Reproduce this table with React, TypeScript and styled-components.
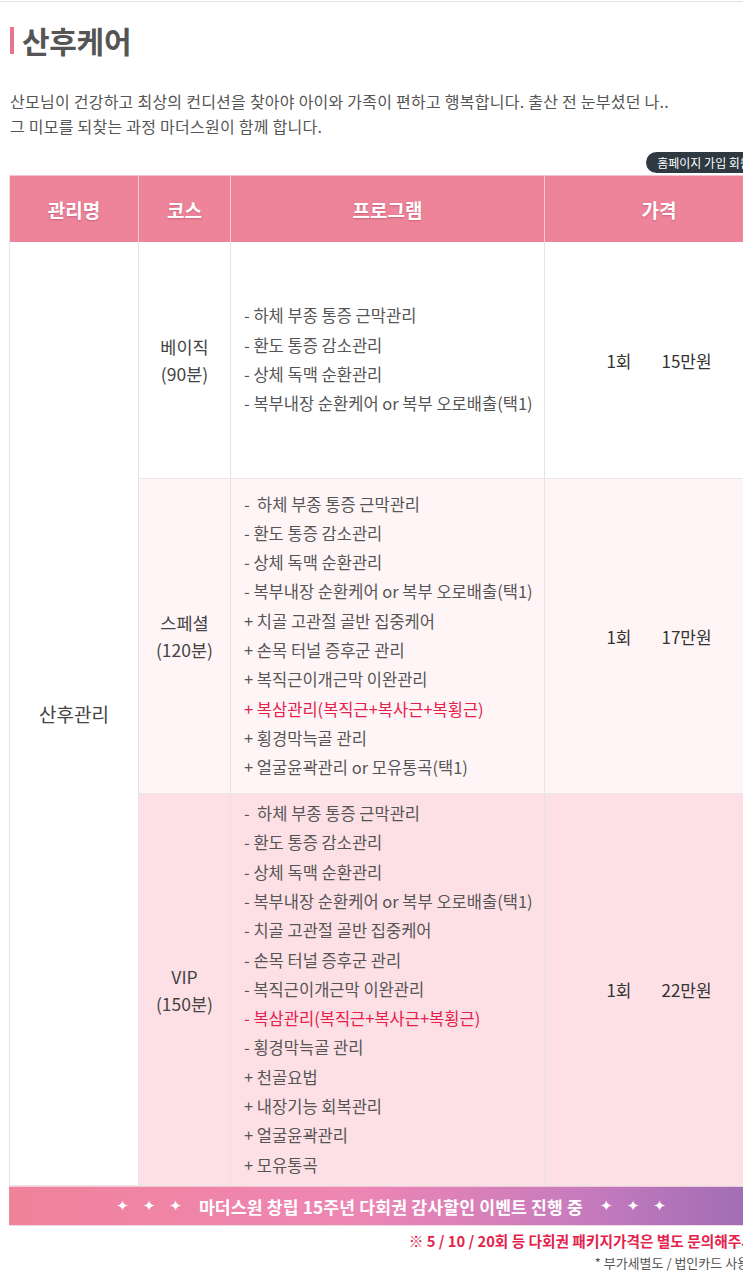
import React from "react";
import styled, { createGlobalStyle } from "styled-components";

const Global = createGlobalStyle`
  html, body { margin: 0; padding: 0; background: #fff; overflow-x: hidden; }
  body { font-family: "Noto Sans CJK KR", "Noto Sans", "DejaVu Sans", sans-serif; color: #555; }
  * { box-sizing: border-box; }
`;

const TopRule = styled.div`
  height: 1px;
  margin-top: 1px;
  background: #e2e2e2;
  width: 100%;
`;

const Wrap = styled.div`
  width: 764px;
  margin-left: 9px;
`;

const Title = styled.h2`
  margin: 20px 0 0 1px;
  display: flex;
  align-items: center;
  gap: 8px;
  font-size: 30px;
  line-height: 36px;
  font-weight: 700;
  color: #555;
  letter-spacing: -0.3px;
`;

const TitleBar = styled.span`
  display: block;
  width: 4px;
  height: 27px;
  background: #e9748c;
`;

const Intro = styled.p`
  margin: 31px 0 0 1px;
  font-size: 16px;
  line-height: 25px;
  color: #555;
  letter-spacing: 0.25px;
`;

const BadgeRow = styled.div`
  display: flex;
  justify-content: flex-end;
  margin-top: 13px;
  margin-bottom: 2px;
`;

const Badge = styled.span`
  display: inline-flex;
  align-items: center;
  height: 21px;
  padding: 0 11px;
  border-radius: 11px;
  background: #2e3942;
  color: #fff;
  font-size: 12px;
  white-space: nowrap;
`;

const Table = styled.div`
  display: grid;
  grid-template-columns: 129px 92px 314px 229px;
  grid-template-rows: 67px 237px 315px 392px;
  border-left: 1px solid #e4e4e4;
`;

const HeadCell = styled.div`
  background: #ed8499;
  color: #fff;
  font-size: 19px;
  font-weight: 700;
  display: flex;
  align-items: center;
  justify-content: center;
  border-right: 1px solid #f7c9d3;
  border-top: 1px solid #f3c4ce;
  text-shadow: 0 1px 2px rgba(150, 40, 70, 0.35);
`;

const Cell = styled.div<{ $bg?: string; $span?: string; $size?: number }>`
  background: ${(p) => p.$bg || "#fff"};
  grid-row: ${(p) => p.$span || "auto"};
  border-right: 1px solid #e6e3e4;
  border-bottom: 1px solid #ebe6e7;
  display: flex;
  align-items: center;
  justify-content: center;
  text-align: center;
  font-size: ${(p) => p.$size || 17.5}px;
  line-height: 27px;
  color: #444;
`;

const ProgramCell = styled.div<{ $bg?: string }>`
  background: ${(p) => p.$bg || "#fff"};
  border-right: 1px solid #e6e3e4;
  border-bottom: 1px solid #ebe6e7;
  display: flex;
  flex-direction: column;
  justify-content: center;
  padding: 0 13px;
`;

const Line = styled.div<{ $red?: boolean }>`
  font-size: 16.5px;
  letter-spacing: 0;
  line-height: 29.3px;
  white-space: pre;
  color: ${(p) => (p.$red ? "#e5214b" : "#555")};
`;

const Price = styled.div`
  display: flex;
  gap: 30px;
  font-size: 17px;
  color: #333;
`;

const Banner = styled.div`
  height: 40px;
  display: flex;
  align-items: center;
  justify-content: center;
  gap: 17px;
  background: linear-gradient(90deg, #f0839a 0%, #ee86b4 45%, #c77bbd 75%, #9a6bb4 100%);
  color: #fff;
  font-size: 17.2px;
  letter-spacing: 0.15px;
  font-weight: 700;
  border-top: 1px solid #f6c7d2;
  border-bottom: 1px solid #f1dbe2;
`;

const Stars = styled.span`
  font-family: "DejaVu Sans", sans-serif;
  font-size: 15px;
  font-weight: 400;
  letter-spacing: 14px;
  margin-right: -14px;
`;

const Notice = styled.div`
  margin-top: 5px;
  text-align: right;
  font-size: 14.7px;
  line-height: 20px;
  font-weight: 700;
  color: #e3234c;
  white-space: nowrap;
`;

const Note = styled.div`
  margin-top: 3px;
  text-align: right;
  font-size: 13px;
  line-height: 18px;
  color: #555;
  white-space: nowrap;
`;

type Row = {
  course: string[];
  bg: string;
  lines: { t: string; red?: boolean }[];
  price: string;
};

const rows: Row[] = [
  {
    course: ["베이직", "(90분)"],
    bg: "#ffffff",
    price: "15만원",
    lines: [
      { t: "- 하체 부종 통증 근막관리" },
      { t: "- 환도 통증 감소관리" },
      { t: "- 상체 독맥 순환관리" },
      { t: "- 복부내장 순환케어 or 복부 오로배출(택1)" },
    ],
  },
  {
    course: ["스페셜", "(120분)"],
    bg: "#fff5f7",
    price: "17만원",
    lines: [
      { t: "-  하체 부종 통증 근막관리" },
      { t: "- 환도 통증 감소관리" },
      { t: "- 상체 독맥 순환관리" },
      { t: "- 복부내장 순환케어 or 복부 오로배출(택1)" },
      { t: "+ 치골 고관절 골반 집중케어" },
      { t: "+ 손목 터널 증후군 관리" },
      { t: "+ 복직근이개근막 이완관리" },
      { t: "+ 복삼관리(복직근+복사근+복횡근)", red: true },
      { t: "+ 횡경막늑골 관리" },
      { t: "+ 얼굴윤곽관리 or 모유통곡(택1)" },
    ],
  },
  {
    course: ["VIP", "(150분)"],
    bg: "#fde0e6",
    price: "22만원",
    lines: [
      { t: "-  하체 부종 통증 근막관리" },
      { t: "- 환도 통증 감소관리" },
      { t: "- 상체 독맥 순환관리" },
      { t: "- 복부내장 순환케어 or 복부 오로배출(택1)" },
      { t: "- 치골 고관절 골반 집중케어" },
      { t: "- 손목 터널 증후군 관리" },
      { t: "- 복직근이개근막 이완관리" },
      { t: "- 복삼관리(복직근+복사근+복횡근)", red: true },
      { t: "- 횡경막늑골 관리" },
      { t: "+ 천골요법" },
      { t: "+ 내장기능 회복관리" },
      { t: "+ 얼굴윤곽관리" },
      { t: "+ 모유통곡" },
    ],
  },
];

export default function App() {
  return (
    <>
      <Global />
      <TopRule />
      <Wrap>
        <Title>
          <TitleBar />
          산후케어
        </Title>
        <Intro>
          산모님이 건강하고 최상의 컨디션을 찾아야 아이와 가족이 편하고 행복합니다. 출산 전 눈부셨던 나..
          <br />
          그 미모를 되찾는 과정 마더스원이 함께 합니다.
        </Intro>
        <BadgeRow>
          <Badge>홈페이지 가입 회원가</Badge>
        </BadgeRow>
        <Table>
          <HeadCell>관리명</HeadCell>
          <HeadCell>코스</HeadCell>
          <HeadCell>프로그램</HeadCell>
          <HeadCell>가격</HeadCell>
          <Cell $span="2 / 5" $size={19}>
            산후관리
          </Cell>
          {rows.map((r) => (
            <React.Fragment key={r.price}>
              <Cell $bg={r.bg}>
                <div>
                  {r.course[0]}
                  <br />
                  {r.course[1]}
                </div>
              </Cell>
              <ProgramCell $bg={r.bg}>
                {r.lines.map((l, i) => (
                  <Line key={i} $red={l.red}>
                    {l.t}
                  </Line>
                ))}
              </ProgramCell>
              <Cell $bg={r.bg}>
                <Price>
                  <span>1회</span>
                  <span>{r.price}</span>
                </Price>
              </Cell>
            </React.Fragment>
          ))}
        </Table>
        <Banner>
          <Stars>✦✦✦</Stars>
          <span>마더스원 창립 15주년 다회권 감사할인 이벤트 진행 중</span>
          <Stars>✦✦✦</Stars>
        </Banner>
        <Notice>※ 5 / 10 / 20회 등 다회권 패키지가격은 별도 문의해주세요.</Notice>
        <Note>* 부가세별도 / 법인카드 사용가능</Note>
      </Wrap>
    </>
  );
}
